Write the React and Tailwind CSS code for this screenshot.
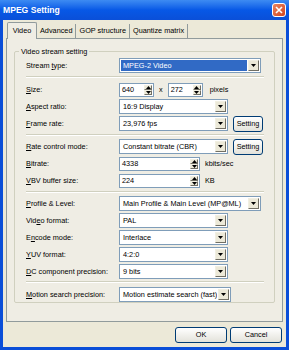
import React from "react"

const Arrow = ({ up }) => (
  <svg width="5" height="3" viewBox="0 0 5 3" className="block">
    <path d={up ? "M0 3h5L2.5 0z" : "M0 0h5L2.5 3z"} fill="#000" />
  </svg>
)

const DropButton = () => (
  <div className="my-[1px] mr-[1px] flex w-[11px] items-center justify-center border border-b-[#716F64] border-l-[#F1EFE2] border-r-[#716F64] border-t-[#F1EFE2] bg-[#ECE9D8]">
    <Arrow />
  </div>
)

const Select = ({ width, value, selected }) => (
  <div className={`flex h-[15px] shrink-0 border border-[#7F9DB9] bg-white ${width}`}>
    <div className="flex min-w-0 flex-1 items-stretch p-[1px]">
      <span
        className={`flex flex-1 items-center overflow-hidden whitespace-nowrap pl-[2px] ${selected ? "bg-[#316AC5] text-white" : ""}`}
      >
        {value}
      </span>
    </div>
    <DropButton />
  </div>
)

const Spin = ({ width, value }) => (
  <div className={`flex h-[14px] shrink-0 border border-[#7F9DB9] bg-white ${width}`}>
    <span className="flex flex-1 items-center pl-[2px]">{value}</span>
    <div className="my-[1px] mr-[1px] flex w-[8px] flex-col">
      <div className="flex flex-1 items-center justify-center border border-b-[#716F64] border-l-[#F1EFE2] border-r-[#716F64] border-t-[#F1EFE2] bg-[#ECE9D8]">
        <Arrow up />
      </div>
      <div className="flex flex-1 items-center justify-center border border-b-[#716F64] border-l-[#F1EFE2] border-r-[#716F64] border-t-[#F1EFE2] bg-[#ECE9D8]">
        <Arrow />
      </div>
    </div>
  </div>
)

const XpButton = ({ children, width, height }) => (
  <div
    className={`flex items-center justify-center rounded-[3px] border border-[#003C74] bg-linear-to-b from-white to-[#E3E2DA] ${width} ${height}`}
  >
    {children}
  </div>
)

const Label = ({ pre = "", u, post = "" }) => (
  <span className="w-[93px] shrink-0 whitespace-nowrap">
    {pre}
    <span className="underline underline-offset-1">{u}</span>
    {post}
  </span>
)

const Row = ({ label, children, mt }) => (
  <div className={`flex h-[15px] items-center ${mt}`}>
    {label}
    {children}
  </div>
)

const Separator = ({ mt }) => (
  <div className={`mr-[10px] h-[2px] border-b border-t border-b-white border-t-[#D0D0BF] ${mt}`} />
)

export default function App() {
  return (
    <div className="flex h-[350px] w-[289px] flex-col bg-[#0A4ED8] font-['Liberation_Sans',Arial,sans-serif] text-[7.3px] leading-none text-black">
      <div className="flex h-[20px] items-center justify-between bg-linear-to-b from-[#3D8BF2] via-[#0758E6] to-[#0A4FD8] pl-[3px] pr-[3px]">
        <span className="text-[8.6px] font-bold text-white">MPEG Setting</span>
        <div className="flex h-[14px] w-[14px] items-center justify-center rounded-[3px] border border-white bg-linear-to-br from-[#E9835F] to-[#D2431B]">
          <svg width="8" height="8" viewBox="0 0 8 8">
            <path d="M1 1L7 7M7 1L1 7" stroke="white" strokeWidth="1.6" />
          </svg>
        </div>
      </div>

      <div className="mx-[3px] mb-[3px] flex flex-1 flex-col bg-[#ECE9D8] px-[3px]">
        <div className="mt-[2px] flex h-[16px] items-end pl-[1px]">
          <div className="relative z-10 -mb-[1px] flex h-[17px] w-[30px] items-center justify-center rounded-t-[2px] border border-b-0 border-[#919B9C] bg-[#EFEDE4]">
            Video
          </div>
          <div className="flex h-[14px] items-center border-r border-[#919B9C] px-[3px]">Advanced</div>
          <div className="flex h-[14px] items-center border-r border-[#919B9C] px-[3px]">GOP structure</div>
          <div className="flex h-[14px] items-center border-r border-[#919B9C] px-[3px]">Quantize matrix</div>
        </div>

        <div className="h-[284px] border border-[#919B9C] bg-[#EFEDE4] px-[7px] pt-[8px]">
          <fieldset className="h-[256px] rounded-[2px] border border-[#D0D0BF] pl-[11px]">
            <legend className="-ml-[7px] px-[2px] leading-[9px]">Video stream setting</legend>

            <Row mt="mt-[2px]" label={<Label pre="Stream " u="t" post="ype:" />}>
              <Select width="w-[142px]" value="MPEG-2 Video" selected />
            </Row>
            <Separator mt="mt-[3px]" />

            <Row mt="mt-[4px]" label={<Label u="S" post="ize:" />}>
              <Spin width="w-[35px]" value="640" />
              <span className="mx-[5px]">x</span>
              <Spin width="w-[35px]" value="272" />
              <span className="ml-[7px]">pixels</span>
            </Row>
            <Row mt="mt-[2px]" label={<Label u="A" post="spect ratio:" />}>
              <Select width="w-[109px]" value="16:9 Display" />
            </Row>
            <Row mt="mt-[2px]" label={<Label u="F" post="rame rate:" />}>
              <Select width="w-[109px]" value="23,976 fps" />
              <div className="ml-[5px]">
                <XpButton width="w-[30px]" height="h-[16px]">Setting</XpButton>
              </div>
            </Row>
            <Separator mt="mt-[3px]" />

            <Row mt="mt-[3px]" label={<Label u="R" post="ate control mode:" />}>
              <Select width="w-[109px]" value="Constant bitrate (CBR)" />
              <div className="ml-[5px]">
                <XpButton width="w-[30px]" height="h-[16px]">Setting</XpButton>
              </div>
            </Row>
            <Row mt="mt-[2px]" label={<Label u="B" post="itrate:" />}>
              <Spin width="w-[81px]" value="4338" />
              <span className="ml-[5px]">kbits/sec</span>
            </Row>
            <Row mt="mt-[2px]" label={<Label u="V" post="BV buffer size:" />}>
              <Spin width="w-[81px]" value="224" />
              <span className="ml-[5px]">KB</span>
            </Row>
            <Separator mt="mt-[3px]" />

            <Row mt="mt-[3px]" label={<Label u="P" post="rofile & Level:" />}>
              <Select width="w-[142px]" value="Main Profile & Main Level (MP@ML)" />
            </Row>
            <Row mt="mt-[2px]" label={<Label pre="Vid" u="e" post="o format:" />}>
              <Select width="w-[109px]" value="PAL" />
            </Row>
            <Row mt="mt-[2px]" label={<Label pre="E" u="n" post="code mode:" />}>
              <Select width="w-[109px]" value="Interlace" />
            </Row>
            <Row mt="mt-[2px]" label={<Label u="Y" post="UV format:" />}>
              <Select width="w-[109px]" value="4:2:0" />
            </Row>
            <Row mt="mt-[2px]" label={<Label u="D" post="C component precision:" />}>
              <Select width="w-[109px]" value="9 bits" />
            </Row>
            <Separator mt="mt-[2px]" />

            <Row mt="mt-[4px]" label={<Label u="M" post="otion search precision:" />}>
              <Select width="w-[112px]" value="Motion estimate search (fast)" />
            </Row>
          </fieldset>
        </div>

        <div className="mt-[5px] flex justify-end gap-[3px] pr-[1px]">
          <XpButton width="w-[52px]" height="h-[16px]">OK</XpButton>
          <XpButton width="w-[52px]" height="h-[16px]">Cancel</XpButton>
        </div>
      </div>
    </div>
  )
}
